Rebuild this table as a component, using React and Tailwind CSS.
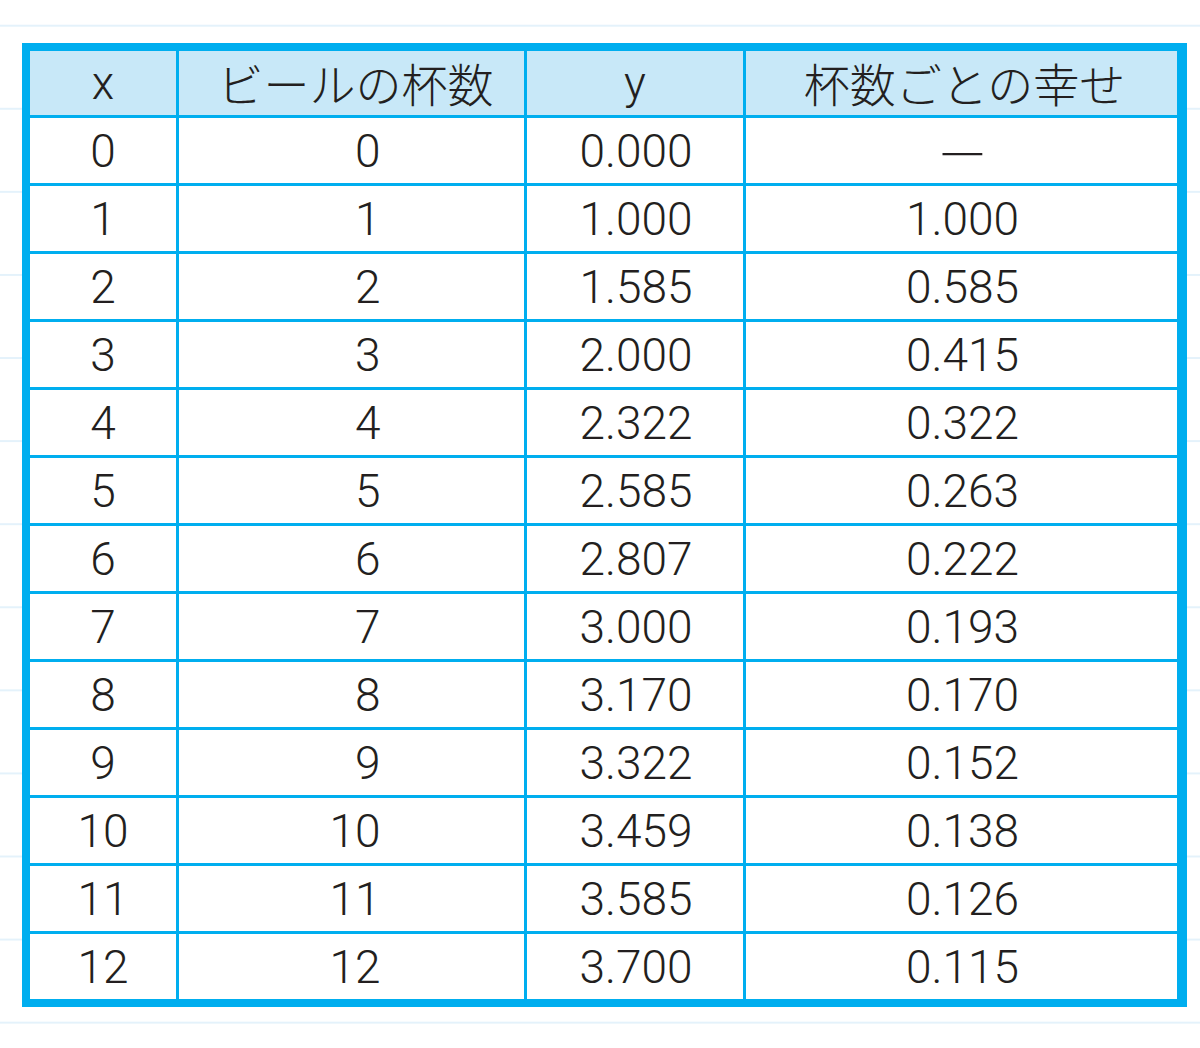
const rows = [
  ["0", "0", "0.000", "—"],
  ["1", "1", "1.000", "1.000"],
  ["2", "2", "1.585", "0.585"],
  ["3", "3", "2.000", "0.415"],
  ["4", "4", "2.322", "0.322"],
  ["5", "5", "2.585", "0.263"],
  ["6", "6", "2.807", "0.222"],
  ["7", "7", "3.000", "0.193"],
  ["8", "8", "3.170", "0.170"],
  ["9", "9", "3.322", "0.152"],
  ["10", "10", "3.459", "0.138"],
  ["11", "11", "3.585", "0.126"],
  ["12", "12", "3.700", "0.115"],
];

const num = "font-['Roboto','Liberation_Sans',sans-serif] font-light";
const jp = "font-['Noto_Sans_CJK_JP','Noto_Sans',sans-serif] font-light";

export default function App() {
  return (
    <div className="w-[1200px] h-[1048px] bg-white bg-[linear-gradient(to_bottom,transparent_0,transparent_25px,#e4f2fb_25px,#e4f2fb_27px,transparent_27px)] bg-[size:100%_83.08px] pt-[43px] pl-[22px] overflow-hidden">
      <div className="w-[1165px] border-[8px] border-r-[10px] border-[#00aeef] bg-[#00aeef] text-[#231f20] text-[46px]">
        <div className="grid grid-cols-[146px_345px_216px_431px] gap-[3px]">
          {/* header */}
          <div className={`h-[64px] leading-[64px] bg-[#c8e8f8] text-center ${num}`}>x</div>
          <div className={`h-[64px] leading-[62px] bg-[#c8e8f8] text-center pl-[8px] ${jp}`}>ビールの杯数</div>
          <div className={`h-[64px] leading-[64px] bg-[#c8e8f8] text-center ${num}`}>y</div>
          <div className={`h-[64px] leading-[62px] bg-[#c8e8f8] text-center pl-[6px] ${jp}`}>杯数ごとの幸せ</div>

          {/* body */}
          {rows.map((r, i) => (
            <div key={i} className="contents">
              <div className={`h-[65px] leading-[67px] bg-white text-center ${num}`}>{r[0]}</div>
              <div className={`h-[65px] leading-[67px] bg-white text-center pl-[6px] ${num}`}>
                <span className="inline-block w-[52px] text-right">{r[1]}</span>
              </div>
              <div className={`h-[65px] leading-[67px] bg-white text-center pl-[2px] ${num}`}>{r[2]}</div>
              {r[3] === "—" ? (
                <div className={`h-[65px] leading-[56px] bg-white text-center pl-[2px] text-[50px] ${jp}`}>—</div>
              ) : (
                <div className={`h-[65px] leading-[67px] bg-white text-center pl-[2px] ${num}`}>{r[3]}</div>
              )}
            </div>
          ))}
        </div>
      </div>
    </div>
  );
}
